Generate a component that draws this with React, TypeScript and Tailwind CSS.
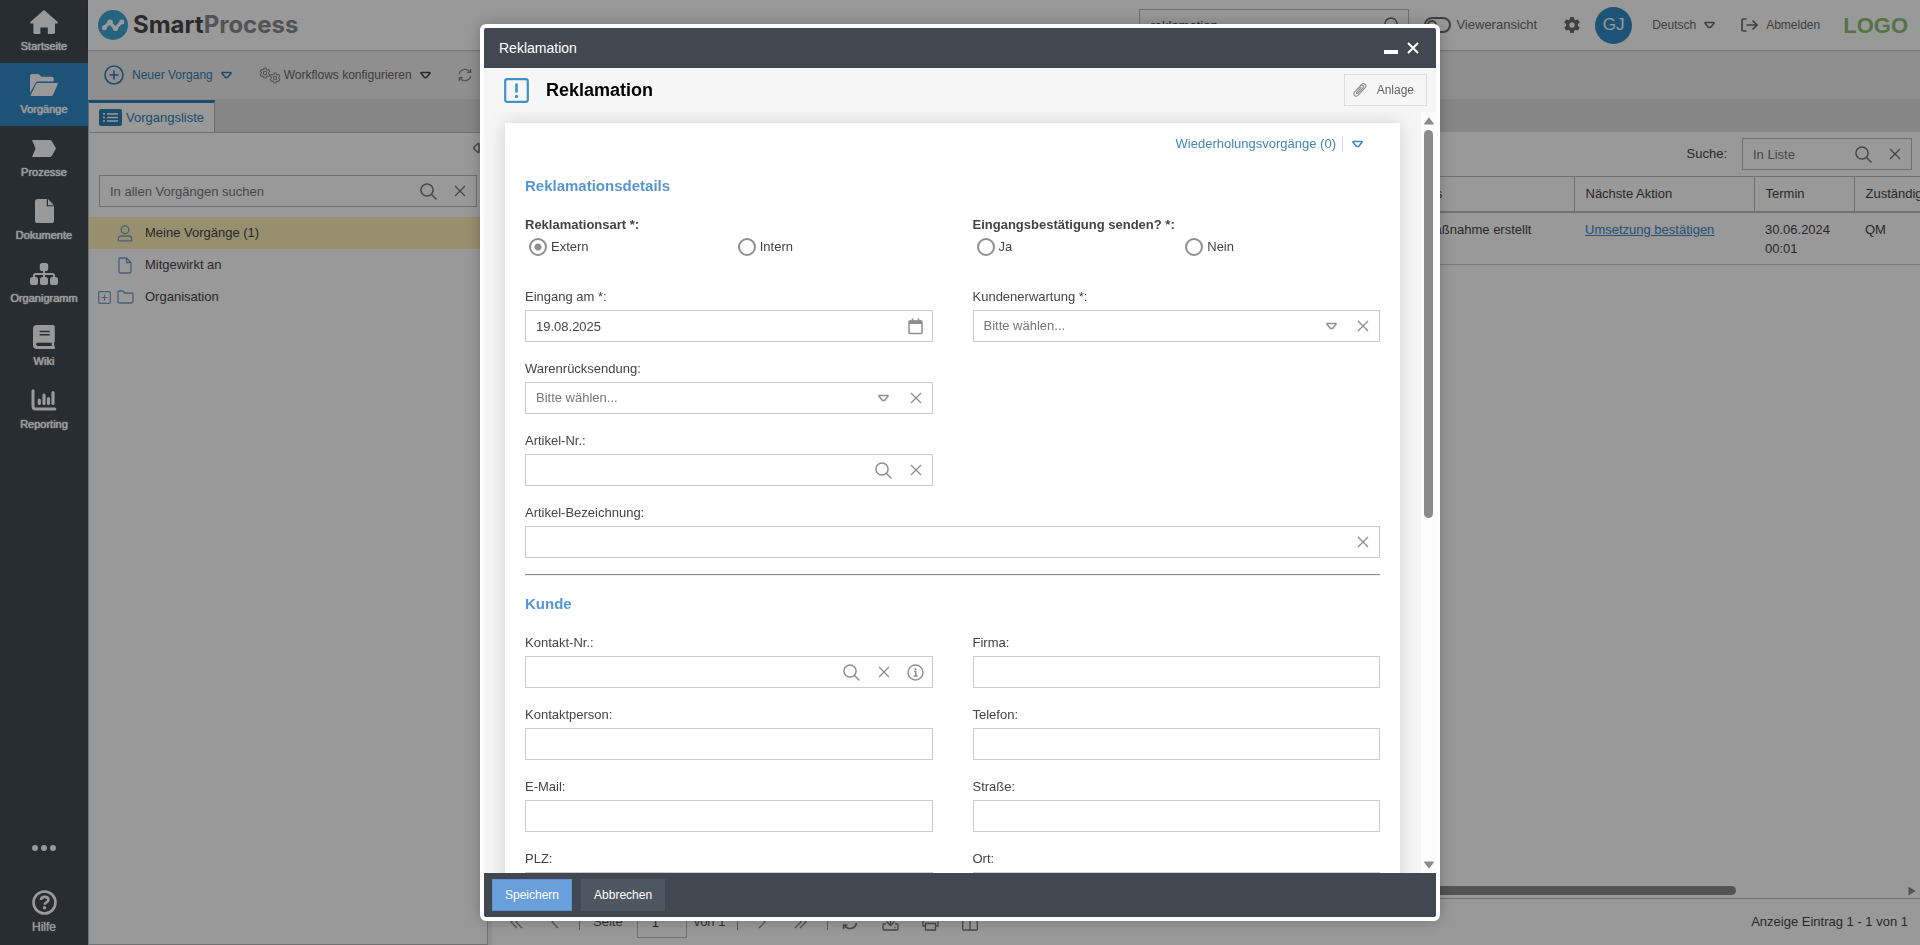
import { useId, type ReactNode } from "react";

/* ---------- icons ---------- */

function TriangleDown({ className = "" }: { className?: string }) {
  return (
    <svg viewBox="0 0 11 8" className={`h-2 w-[11px] shrink-0 ${className}`} fill="none" stroke="currentColor" strokeWidth="1.5" strokeLinejoin="round" aria-hidden="true">
      <path d="M1 1.500h9v.8L6.500 6.500h-2L1 2.300z" />
    </svg>
  );
}

function Cross() {
  return (
    <svg viewBox="0 0 12 12" className="size-3" fill="none" stroke="currentColor" strokeWidth="1.4" aria-hidden="true">
      <path d="M1 1l10 10M11 1L1 11" />
    </svg>
  );
}

function Magnifier() {
  return (
    <svg viewBox="0 0 17 17" className="size-[17px]" fill="none" stroke="currentColor" strokeWidth="1.5" strokeLinecap="round" aria-hidden="true">
      <circle cx="7" cy="7" r="6.1" />
      <path d="M11.5 11.5L16 16" />
    </svg>
  );
}

function InfoCircle() {
  return (
    <svg viewBox="0 0 17 17" className="size-[17px]" fill="none" stroke="currentColor" aria-hidden="true">
      <circle cx="8.5" cy="8.5" r="7.5" strokeWidth="1.4" />
      <path d="M7 7.6h1.8v4.2M6.6 12h4" strokeWidth="1.5" />
      <circle cx="8.5" cy="5.1" r="1.1" fill="currentColor" stroke="none" />
    </svg>
  );
}

function Calendar() {
  return (
    <svg viewBox="0 0 15 17" className="h-[17px] w-[15px]" fill="none" stroke="currentColor" aria-hidden="true">
      <rect x="1" y="3" width="13" height="12.6" rx="1" strokeWidth="1.5" />
      <path d="M1 4.3h13" strokeWidth="3.4" />
      <path d="M4.5 0.5v3M10.5 0.5v3" strokeWidth="1.6" />
    </svg>
  );
}

function HomeIcon() {
  return (
    <svg viewBox="0 0 28 24" className="h-6 w-7" fill="currentColor" aria-hidden="true">
      <path d="M14 0L28 12.2q0 1.3-1.2 1.4H25v9q0 1.4-1.4 1.4h-5.8v-6.6h-7.4V24H5q-1.6 0-1.6-1.6v-8.8H1.4Q0 13.500 0 12.200z" />
    </svg>
  );
}

function FolderOpenIcon() {
  return (
    <svg viewBox="0 0 28 22" className="h-[22px] w-7" fill="currentColor" aria-hidden="true">
      <path d="M0 19V1.800Q0 0 1.800 0h6q1 0 1.700.8L11.300 2.800h10.500q1.800 0 1.800 1.800v2.900H7.800Q6.300 7.500 5.500 8.900z" />
      <path d="M7.600 8.900H26.800q1.500 0 .9 1.400L23.200 20.500Q22.600 22 21.200 22H1.600q-1.300 0-.7-1.200L6.100 9.800Q6.500 8.900 7.600 8.900z" />
    </svg>
  );
}

function ProcessIcon() {
  return (
    <svg viewBox="0 0 24 17" className="h-[17px] w-6" fill="currentColor" aria-hidden="true">
      <path d="M0 0h17.500q1.600 0 2.300 1.100L24 8.500l-4.200 7.400Q19.100 17 17.500 17H0l3.600-8.500z" />
    </svg>
  );
}

function DocumentIcon() {
  return (
    <svg viewBox="0 0 19 24" className="h-6 w-[19px]" fill="currentColor" aria-hidden="true">
      <path d="M2.600 0h9.200v7.200H19v14.200q0 2.600-2.600 2.600H2.600Q0 24 0 21.400V2.600Q0 0 2.600 0z" />
      <path d="M13 0L19 6.200h-6z" />
    </svg>
  );
}

function OrgChartIcon() {
  return (
    <svg viewBox="0 0 28 22" className="h-[22px] w-7" aria-hidden="true">
      <g fill="currentColor">
        <rect x="9.800" y="0" width="8.400" height="8" rx="2.600" />
        <rect x="0" y="14" width="8" height="8" rx="2.600" />
        <rect x="10" y="14" width="8" height="8" rx="2.600" />
        <rect x="20" y="14" width="8" height="8" rx="2.600" />
      </g>
      <path d="M14 7v8M4 15v-2.500q0-1.500 1.500-1.500h17q1.500 0 1.500 1.500V15" fill="none" stroke="currentColor" strokeWidth="2" />
    </svg>
  );
}

function BookIcon() {
  return (
    <svg viewBox="0 0 22 24" className="h-6 w-[22px]" aria-hidden="true">
      <path fill="currentColor" fillRule="evenodd" d="M4 0h16q1.800 0 1.800 1.800v14.500q0 .8-.7 1.200v3.600h.7V24H4Q0 24 0 20V4Q0 0 4 0zM6.700 5.800v1.400h10V5.800zM6.700 9v1.400h10V9zM4.500 17.800q-1.500.2-1.500 1.500t1.500 1.600h14.300v-3.100z" />
    </svg>
  );
}

function ReportIcon() {
  return (
    <svg viewBox="0 0 26 22" className="h-[22px] w-[26px]" fill="none" stroke="currentColor" strokeLinecap="round" aria-hidden="true">
      <path d="M2 1.800v15.500q0 2.800 2.800 2.800h19" strokeWidth="3" />
      <path d="M8.300 11.200v3.300M13 6.200v8.300M17.500 9.500v5M22 3.500v11" strokeWidth="3.200" />
    </svg>
  );
}

function HelpIcon() {
  return (
    <svg viewBox="0 0 25 25" className="size-[25px]" fill="none" stroke="currentColor" aria-hidden="true">
      <circle cx="12.500" cy="12.500" r="11" strokeWidth="2.600" />
      <path d="M8.900 9.900q.4-3 3.700-3 3.800 0 3.800 2.900 0 1.600-2 2.600-1.700.9-1.700 2.300" strokeWidth="2.600" />
      <circle cx="12.500" cy="17.700" r="1.700" fill="currentColor" stroke="none" />
    </svg>
  );
}

function LogoMark() {
  return (
    <svg viewBox="0 0 30 30" className="size-[30px]" aria-hidden="true">
      <circle cx="15" cy="15" r="15" fill="#3fa5d8" />
      <path d="M6.500 17.500L11.500 12.500 17.500 18.500 23.500 12" fill="none" stroke="#fff" strokeWidth="3.200" strokeLinejoin="round" />
      <g fill="#fff">
        <circle cx="6.300" cy="17.800" r="2.500" />
        <circle cx="12" cy="12.300" r="2.800" />
        <circle cx="17.500" cy="18.200" r="2.800" />
        <circle cx="23.800" cy="11.900" r="2.500" />
      </g>
    </svg>
  );
}

function Gear({ className = "size-4", strokeWidth = 0 }: { className?: string; strokeWidth?: number }) {
  const solid = strokeWidth === 0;
  return (
    <svg viewBox="0 0 24 24" className={className} fill={solid ? "currentColor" : "none"} stroke={solid ? "none" : "currentColor"} strokeWidth={strokeWidth} fillRule="evenodd" aria-hidden="true">
      <path d="M9.400 0h5.200l.7 3.500 2.300 1.300L21 3.700l2.600 4.500-2.700 2.400v2.800l2.700 2.400-2.600 4.500-3.400-1.100-2.300 1.300-.7 3.500H9.400l-.7-3.500-2.300-1.300L3 20.300.4 15.800l2.700-2.400v-2.800L.4 8.200 3 3.700l3.400 1.100 2.300-1.300zM12 8a4 4 0 100 8 4 4 0 000-8z" />
    </svg>
  );
}

function RefreshIcon({ className }: { className: string }) {
  return (
    <svg viewBox="0 0 16 16" className={className} fill="none" stroke="currentColor" strokeWidth="1.500" aria-hidden="true">
      <path d="M1.500 7A6.600 6.600 0 0113.500 4.500M14.500 1v4h-4M14.500 9A6.600 6.600 0 012.500 11.500M1.500 15v-4h4" />
    </svg>
  );
}

/* ---------- form parts ---------- */

function IconButton({ label, children }: { label: string; children: ReactNode }) {
  return (
    <button type="button" aria-label={label} className="flex w-8 shrink-0 items-center justify-center self-stretch">
      {children}
    </button>
  );
}

function Field({
  label,
  value,
  select = false,
  wide = false,
  children,
}: {
  label: string;
  value?: string;
  select?: boolean;
  wide?: boolean;
  children?: ReactNode;
}) {
  const id = useId();
  return (
    <div className={wide ? "col-span-2" : "col-start-auto"}>
      <label htmlFor={id} className="block pt-0.5 leading-[18px]">
        {label}
      </label>
      <div className="mt-1 flex h-8 items-center border border-[#cbcbcb] bg-white text-[#8f8f8f]">
        {select ? (
          <>
            <select id={id} className="h-full min-w-0 flex-1 appearance-none bg-transparent px-2.5 text-[#777] outline-none">
              <option>Bitte wählen...</option>
            </select>
            <span className="pointer-events-none flex w-8 justify-center">
              <TriangleDown />
            </span>
          </>
        ) : (
          <input id={id} type="text" defaultValue={value} className="h-full min-w-0 flex-1 bg-transparent px-2.5 text-[#444] outline-none" />
        )}
        {children}
      </div>
    </div>
  );
}

function RadioGroup({ legend, name, options, selected }: { legend: string; name: string; options: string[]; selected?: string }) {
  return (
    <fieldset className="h-14">
      <legend className="pt-0.5 leading-[18px] font-bold">{legend}</legend>
      <div className="grid grid-cols-2 gap-x-3.5 pt-1 pl-1">
        {options.map((option) => (
          <label key={option} className="flex items-center gap-1 leading-[18px]">
            <input
              type="radio"
              name={name}
              defaultChecked={option === selected}
              className="size-[18px] appearance-none rounded-full border-2 border-[#8f8f8f] bg-white checked:bg-[radial-gradient(circle,#8f8f8f_3px,transparent_4px)]"
            />
            {option}
          </label>
        ))}
      </div>
    </fieldset>
  );
}

function SectionTitle({ children }: { children: ReactNode }) {
  return <h2 className="text-[15px] leading-5 font-bold text-[#5795d3]">{children}</h2>;
}

/* ---------- background application ---------- */

const navItems = [
  { label: "Startseite", icon: <HomeIcon /> },
  { label: "Vorgänge", icon: <FolderOpenIcon />, active: true },
  { label: "Prozesse", icon: <ProcessIcon /> },
  { label: "Dokumente", icon: <DocumentIcon /> },
  { label: "Organigramm", icon: <OrgChartIcon /> },
  { label: "Wiki", icon: <BookIcon /> },
  { label: "Reporting", icon: <ReportIcon /> },
];

function Sidebar() {
  return (
    <nav className="flex w-[88px] shrink-0 flex-col bg-[#444c52] text-white">
      {navItems.map((item) => (
        <a
          key={item.label}
          href="#"
          className={`flex h-[63px] flex-col items-center pt-[9px] text-[11px] text-shadow-[0_0_1px_#fff,0_0_1px_#fff] ${item.active ? "bg-[#308bc6]" : ""}`}
        >
          <span className="flex h-[26px] items-center">{item.icon}</span>
          <span className="mt-[3px] leading-4">{item.label}</span>
        </a>
      ))}
      <button type="button" aria-label="Mehr" className="mt-auto flex justify-center gap-[3px] pb-[39px]">
        <span className="size-1.5 rounded-full bg-white" />
        <span className="size-1.5 rounded-full bg-white" />
        <span className="size-1.5 rounded-full bg-white" />
      </button>
      <a href="#" className="flex flex-col items-center pb-2.5 text-xs text-shadow-[0_0_1px_#fff]">
        <HelpIcon />
        <span className="mt-1 leading-4">Hilfe</span>
      </a>
    </nav>
  );
}

function TopBar() {
  return (
    <header className="z-10 flex h-[50px] shrink-0 items-center bg-white pr-3 pl-2.5 text-[#6b6b6b] shadow-[0_1px_2px_rgba(0,0,0,0.25)]">
      <LogoMark />
      <span className="ml-[5px] font-['Inter'] text-2xl font-bold text-[#474747]">
        Smart<span className="text-[#8a8a8a]">Process</span>
      </span>
      <div className="ml-auto flex h-8 w-[270px] items-center border border-[#bbb]">
        <input aria-label="Globale Suche" defaultValue="reklamation" className="h-full min-w-0 flex-1 px-2.5 text-[#444] outline-none" />
        <IconButton label="Suchen">
          <Magnifier />
        </IconButton>
      </div>
      <label className="ml-[15px] flex items-center gap-[5px]">
        <input type="checkbox" role="switch" className="peer sr-only" />
        <span className="flex h-4 w-[27px] items-center rounded-full border-2 border-[#6b6b6b] pl-px">
          <span className="size-2.5 rounded-full border-2 border-[#6b6b6b]" />
        </span>
        Vieweransicht
      </label>
      <button type="button" aria-label="Einstellungen" className="ml-[27px]">
        <Gear />
      </button>
      <button type="button" className="ml-[15px] size-[37px] rounded-full bg-[#308bc6] text-[17px] text-white">
        GJ
      </button>
      <button type="button" className="ml-5 flex items-center gap-2 text-xs">
        Deutsch
        <TriangleDown />
      </button>
      <a href="#" className="ml-[26px] flex items-center gap-2 text-xs">
        <svg viewBox="0 0 17 14" className="h-3.5 w-[17px]" fill="none" stroke="currentColor" strokeWidth="1.700" aria-hidden="true">
          <path d="M5.500 1H2.500Q1 1 1 2.500v9Q1 13 2.500 13h3M5.500 7h10M11.500 2.500L16 7l-4.500 4.500" />
        </svg>
        Abmelden
      </a>
      <span className="ml-[23px] text-[22px] font-bold text-[#8bc175]">LOGO</span>
    </header>
  );
}

function Toolbar() {
  return (
    <div className="flex h-[49px] shrink-0 items-center bg-[#efefef] pl-4 text-xs text-[#666]">
      <button type="button" className="flex items-center gap-2 text-[#2e7fb5]">
        <svg viewBox="0 0 20 20" className="size-5" fill="none" stroke="currentColor" strokeWidth="1.600" aria-hidden="true">
          <circle cx="10" cy="10" r="9" />
          <path d="M10 5.500v9M5.500 10h9" />
        </svg>
        Neuer Vorgang
        <TriangleDown />
      </button>
      <button type="button" className="ml-7 flex items-center gap-1">
        <span className="flex items-center text-[#8a8a8a]">
          <Gear className="-mt-1 size-2.5 overflow-visible" strokeWidth={2.5} />
          <Gear className="mt-1.5 size-2.5 overflow-visible" strokeWidth={2.5} />
        </span>
        Workflows konfigurieren
        <TriangleDown className="ml-1 text-[#444]" />
      </button>
      <button type="button" aria-label="Aktualisieren" className="ml-[27px] text-[#8a8a8a]">
        <RefreshIcon className="size-3.5" />
      </button>
    </div>
  );
}

function TabStrip() {
  return (
    <div className="flex h-[33px] shrink-0 items-end bg-[#dfdfdf]">
      <button type="button" className="flex h-8 items-center gap-1 border-t-3 border-r border-l border-t-[#2e7fb5] border-r-[#b5b5b5] border-l-[#b5b5b5] bg-white px-2.5 text-[#2e7fb5]">
        <svg viewBox="0 0 23 17" className="h-[17px] w-[23px]" aria-hidden="true">
          <rect width="23" height="17" rx="2" fill="#2e7fb5" />
          <path d="M4 5h2M8 5h11M4 8.500h2M8 8.500h11M4 12h2M8 12h11" stroke="#fff" strokeWidth="1.300" />
        </svg>
        Vorgangsliste
      </button>
    </div>
  );
}

function TreePanel() {
  return (
    <aside className="flex w-[400px] shrink-0 flex-col border border-[#bdbdbd] bg-white">
      <div className="flex h-[42px] items-start justify-end pt-[11px] pr-[5px] text-[#777]">
        <button type="button" aria-label="Bereich einklappen">
          <TriangleDown className="rotate-90" />
        </button>
      </div>
      <div className="mr-2.5 ml-2.5 flex h-8 items-center border border-[#bbb] text-[#777]">
        <input aria-label="Suche in Vorgängen" placeholder="In allen Vorgängen suchen" className="h-full min-w-0 flex-1 px-2.5 outline-none placeholder:text-[#777]" />
        <IconButton label="Suchen">
          <Magnifier />
        </IconButton>
        <IconButton label="Leeren">
          <Cross />
        </IconButton>
      </div>
      <ul className="mt-2.5 text-[#444]">
        <li className="flex h-8 items-center bg-[#fbf0b9] pl-7">
          <svg viewBox="0 0 16 17" className="h-[17px] w-4" fill="none" stroke="#7c9fc6" strokeWidth="1.300" aria-hidden="true">
            <circle cx="8" cy="4.700" r="3.900" />
            <path d="M1.300 15.800V14q0-3 3-3h7.400q3 0 3 3v1.800z" />
          </svg>
          <span className="ml-3">Meine Vorgänge (1)</span>
        </li>
        <li className="flex h-8 items-center pl-7">
          <svg viewBox="0 0 16 17" className="h-[17px] w-4" fill="none" stroke="#7c9fc6" strokeWidth="1.300" aria-hidden="true">
            <path d="M3 1h6.500L14 5.500V14.500q0 1.500-1.500 1.500H3.500Q2 16 2 14.500V2Q2 1 3 1zM9.500 1v4.500H14" />
          </svg>
          <span className="ml-3">Mitgewirkt an</span>
        </li>
        <li className="flex h-8 items-center pl-[9px]">
          <svg viewBox="0 0 13 13" className="size-[13px]" fill="none" stroke="#7c9fc6" strokeWidth="1.200" aria-hidden="true">
            <rect x="0.700" y="0.700" width="11.600" height="11.600" rx="1" />
            <path d="M6.500 3.500v6M3.500 6.500h6" />
          </svg>
          <svg viewBox="0 0 17 14" className="ml-[6px] h-3.5 w-[17px]" fill="none" stroke="#7c9fc6" strokeWidth="1.300" aria-hidden="true">
            <path d="M1 11.500V1.700Q1 1 1.700 1H6l1.500 2H15q1 0 1 1v7.500q0 1.500-1.500 1.500h-12Q1 13 1 11.500z" />
          </svg>
          <span className="ml-[11px]">Organisation</span>
        </li>
      </ul>
    </aside>
  );
}

function Pager() {
  return (
    <div className="flex h-[47px] shrink-0 items-center border-t border-[#bdbdbd] pr-3 pl-[18px] text-[#888]">
      <button type="button" aria-label="Erste Seite">
        <svg viewBox="0 0 13 14" className="h-3.5 w-[13px]" fill="none" stroke="currentColor" strokeWidth="1.200" aria-hidden="true">
          <path d="M7 1L1 7l6 6M12 1L6 7l6 6" />
        </svg>
      </button>
      <button type="button" aria-label="Vorherige Seite" className="ml-7">
        <svg viewBox="0 0 8 14" className="h-3.5 w-2" fill="none" stroke="currentColor" strokeWidth="1.200" aria-hidden="true">
          <path d="M7 1L1 7l6 6" />
        </svg>
      </button>
      <span className="ml-5 h-4 w-px bg-[#999]" />
      <label className="ml-[13px] flex items-center gap-3.5 text-[#555]">
        Seite
        <input defaultValue="1" className="h-8 w-[50px] border border-[#bbb] pl-3.5 text-[#444] outline-none" />
      </label>
      <span className="ml-[7px] text-[#555]">von 1</span>
      <span className="ml-3 h-4 w-px bg-[#999]" />
      <button type="button" aria-label="Nächste Seite" className="ml-5">
        <svg viewBox="0 0 8 14" className="h-3.5 w-2" fill="none" stroke="currentColor" strokeWidth="1.200" aria-hidden="true">
          <path d="M1 1l6 6-6 6" />
        </svg>
      </button>
      <button type="button" aria-label="Letzte Seite" className="ml-7">
        <svg viewBox="0 0 13 14" className="h-3.5 w-[13px]" fill="none" stroke="currentColor" strokeWidth="1.200" aria-hidden="true">
          <path d="M1 1l6 6-6 6M6 1l6 6-6 6" />
        </svg>
      </button>
      <span className="ml-5 h-4 w-px bg-[#999]" />
      <button type="button" aria-label="Neu laden" className="ml-3.5 text-[#777]">
        <RefreshIcon className="size-4" />
      </button>
      <button type="button" aria-label="Herunterladen" className="ml-6 text-[#777]">
        <svg viewBox="0 0 17 17" className="size-[17px]" fill="none" stroke="currentColor" strokeWidth="1.300" aria-hidden="true">
          <path d="M8.500 1v10M4.500 7.500l4 4 4-4M4 10H2Q1 10 1 11.500V15q0 1 1 1h13q1 0 1-1v-3.500Q16 10 15 10h-2M12.500 13.500h1" />
        </svg>
      </button>
      <button type="button" aria-label="Drucken" className="ml-[23px] text-[#777]">
        <svg viewBox="0 0 17 17" className="size-[17px]" fill="none" stroke="currentColor" strokeWidth="1.300" aria-hidden="true">
          <path d="M3.500 5V1h10v4M3.500 12H1V5h15v7h-2.500M3.500 9.500h10V16h-10z" />
        </svg>
      </button>
      <button type="button" aria-label="Spalten" className="ml-[23px] text-[#777]">
        <svg viewBox="0 0 16 17" className="h-[17px] w-4" fill="none" stroke="currentColor" strokeWidth="1.300" aria-hidden="true">
          <rect x="0.700" y="1" width="14.600" height="15" rx="1" />
          <path d="M8 1v15" />
        </svg>
      </button>
      <span className="ml-auto text-[#444]">Anzeige Eintrag 1 - 1 von 1</span>
    </div>
  );
}

function ListPanel() {
  return (
    <main className="flex min-w-0 flex-1 flex-col overflow-hidden bg-white text-[#444]">
      <label className="flex h-11 shrink-0 items-center justify-end gap-[15px] pr-2">
        Suche:
        <span className="flex h-8 w-[170px] items-center border border-[#bbb] text-[#777]">
          <input placeholder="In Liste" className="h-full min-w-0 flex-1 px-2.5 outline-none placeholder:text-[#777]" />
          <IconButton label="Suchen">
            <Magnifier />
          </IconButton>
          <IconButton label="Leeren">
            <Cross />
          </IconButton>
        </span>
      </label>
      <table className="w-full table-fixed border-collapse text-left">
        <colgroup>
          <col />
          <col className="w-[180px]" />
          <col className="w-[180px]" />
          <col className="w-[100px]" />
          <col className="w-[66px]" />
        </colgroup>
        <thead>
          <tr className="h-[35px] border-t border-b-2 border-[#bdbdbd] *:overflow-hidden *:border-l *:border-[#bdbdbd] *:pl-[11px] *:font-normal *:whitespace-nowrap">
            <th />
            <th>Status</th>
            <th>Nächste Aktion</th>
            <th>Termin</th>
            <th>Zuständig</th>
          </tr>
        </thead>
        <tbody>
          <tr className="h-[53px] border-b border-[#ccc] align-top *:pt-[7px] *:pl-[11px] *:leading-[19px]">
            <td />
            <td>1 - Maßnahme erstellt</td>
            <td>
              <a href="#" className="text-[#3f83c9] underline">
                Umsetzung bestätigen
              </a>
            </td>
            <td>30.06.2024 00:01</td>
            <td>QM</td>
          </tr>
        </tbody>
      </table>
      <div className="mt-auto flex h-[15px] shrink-0 items-center pr-1 pl-4" aria-hidden="true">
        <div className="flex flex-1">
          <div className="h-[9px] w-[87.7%] rounded-full bg-[#8b8b8b]" />
        </div>
        <svg viewBox="0 0 8 10" className="h-2.5 w-2" fill="#8b8b8b">
          <path d="M0.500 0.500L7.500 5 .5 9.500z" />
        </svg>
      </div>
      <Pager />
    </main>
  );
}

/* ---------- dialog ---------- */

function ComplaintDialog() {
  return (
    <div role="dialog" aria-modal="true" aria-label="Reklamation" className="flex w-1/2 flex-col overflow-hidden rounded-md border-4 border-white bg-[#f6f6f6] shadow-[0_0_16px_rgba(0,0,0,0.25)]">
      <div className="flex h-10 shrink-0 items-center bg-[#42484f] pr-[17px] pl-[15px] text-sm text-white">
        Reklamation
        <button type="button" aria-label="Minimieren" className="ml-auto">
          <svg viewBox="0 0 14 12" className="h-3 w-3.5" aria-hidden="true">
            <rect y="8" width="14" height="4" fill="#fff" />
          </svg>
        </button>
        <button type="button" aria-label="Schließen" className="ml-[9px]">
          <svg viewBox="0 0 12 12" className="size-3" stroke="#fff" strokeWidth="2" aria-hidden="true">
            <path d="M1 1l10 10M11 1L1 11" />
          </svg>
        </button>
      </div>

      <div className="flex h-11 shrink-0 items-center pr-[9px] pl-5">
        <svg viewBox="0 0 25 25" className="size-[25px]" fill="none" aria-hidden="true">
          <rect x="1.200" y="1.200" width="22.600" height="22.600" rx="2" stroke="#4191c9" strokeWidth="2.200" />
          <path d="M12.500 5.500v9" stroke="#4191c9" strokeWidth="2.600" />
          <circle cx="12.500" cy="18.500" r="1.700" fill="#4191c9" />
        </svg>
        <h1 className="ml-[17px] text-lg leading-6 font-bold text-black">Reklamation</h1>
        <button type="button" className="ml-auto flex h-8 items-center gap-2.5 border border-[#dedede] pr-3 pl-2 text-xs text-[#666]">
          <svg viewBox="0 0 15 16" className="h-4 w-3.5" fill="none" stroke="#8f8f8f" strokeWidth="1.200" strokeLinecap="round" aria-hidden="true">
            <path d="M3.200 8.500L9.300 1.900q1.800-1.600 3.600-.1 1.800 1.800.1 3.700l-7.600 8.300q-1.900 1.700-3.800.1-1.600-1.900.1-3.800L8.600 3.400q1.200-1 2.200 0t0 2.300L5.200 11.700q-.8.700-1.300.1t.1-1.300L8.600 5.500" />
          </svg>
          Anlage
        </button>
      </div>

      <div className="flex min-h-0 flex-1">
        <div className="min-w-0 flex-1 overflow-hidden px-[21px] pt-[11px]">
          <div className="bg-white px-5 pt-[11px] pb-5 shadow-[0_0_18px_rgba(0,0,0,0.15)]">
            <div className="flex h-5 items-center justify-end pr-[17px] text-[#3f86b5]">
              <a href="#">Wiederholungsvorgänge (0)</a>
              <span className="ml-1.5 h-4 w-px bg-[#ddd]" />
              <button type="button" aria-label="Wiederholungsvorgänge öffnen" className="ml-[9px]">
                <TriangleDown />
              </button>
            </div>

            <form className="mt-[22px]">
              <SectionTitle>Reklamationsdetails</SectionTitle>
              <div className="mt-[18px] grid grid-cols-2 gap-x-10 gap-y-4">
                <RadioGroup legend="Reklamationsart *:" name="art" options={["Extern", "Intern"]} selected="Extern" />
                <RadioGroup legend="Eingangsbestätigung senden? *:" name="bestaetigung" options={["Ja", "Nein"]} />
                <Field label="Eingang am *:" value="19.08.2025">
                  <IconButton label="Kalender öffnen">
                    <Calendar />
                  </IconButton>
                </Field>
                <Field label="Kundenerwartung *:" select>
                  <IconButton label="Leeren">
                    <Cross />
                  </IconButton>
                </Field>
                <Field label="Warenrücksendung:" select>
                  <IconButton label="Leeren">
                    <Cross />
                  </IconButton>
                </Field>
                <div />
                <Field label="Artikel-Nr.:">
                  <IconButton label="Suchen">
                    <Magnifier />
                  </IconButton>
                  <IconButton label="Leeren">
                    <Cross />
                  </IconButton>
                </Field>
                <Field label="Artikel-Bezeichnung:" wide>
                  <IconButton label="Leeren">
                    <Cross />
                  </IconButton>
                </Field>
              </div>
              <hr className="mt-4 mb-[18px] h-0.5 border-t border-t-[#8f8f8f] bg-[#eee]" />
              <SectionTitle>Kunde</SectionTitle>
              <div className="mt-[18px] grid grid-cols-2 gap-x-10 gap-y-4">
                <Field label="Kontakt-Nr.:">
                  <IconButton label="Suchen">
                    <Magnifier />
                  </IconButton>
                  <IconButton label="Leeren">
                    <Cross />
                  </IconButton>
                  <IconButton label="Information">
                    <InfoCircle />
                  </IconButton>
                </Field>
                <Field label="Firma:" />
                <Field label="Kontaktperson:" />
                <Field label="Telefon:" />
                <Field label="E-Mail:" />
                <Field label="Straße:" />
                <Field label="PLZ:" />
                <Field label="Ort:" />
              </div>
            </form>
          </div>
        </div>
        <div className="flex w-[15px] shrink-0 flex-col items-center bg-[#fcfcfc] pt-[5px] pb-1" aria-hidden="true">
          <svg viewBox="0 0 10 8" className="h-2 w-2.5 shrink-0" fill="#8b8b8b">
            <path d="M5 .2L9.700 6.500v1H.3v-1z" />
          </svg>
          <div className="my-[5px] flex-1">
            <div className="h-[53.5%] w-[9px] rounded-full bg-[#8b8b8b]" />
          </div>
          <svg viewBox="0 0 10 8" className="h-2 w-2.5 shrink-0" fill="#8b8b8b">
            <path d="M5 7.800L.3 1.500v-1h9.400v1z" />
          </svg>
        </div>
      </div>

      <div className="flex h-11 shrink-0 items-center gap-[9px] bg-[#42484f] px-2 text-xs text-white text-shadow-[0_0_1px_#fff]">
        <button type="button" className="h-8 border border-[#5a93d1] bg-[#69a0dc] px-3">
          Speichern
        </button>
        <button type="button" className="h-8 bg-[#4e575f] px-[13px]">
          Abbrechen
        </button>
      </div>
    </div>
  );
}

export default function App() {
  return (
    <div className="relative flex h-screen overflow-hidden font-['Liberation_Sans',Arial,sans-serif] text-[13px] text-[#444]">
      <Sidebar />
      <div className="flex min-w-0 flex-1 flex-col">
        <TopBar />
        <Toolbar />
        <TabStrip />
        <div className="flex min-h-0 flex-1">
          <TreePanel />
          <div className="w-1 shrink-0 bg-[#efefef]" />
          <ListPanel />
        </div>
      </div>
      <div className="fixed inset-0 z-20 flex justify-center bg-black/40 py-6">
        <ComplaintDialog />
      </div>
    </div>
  );
}
